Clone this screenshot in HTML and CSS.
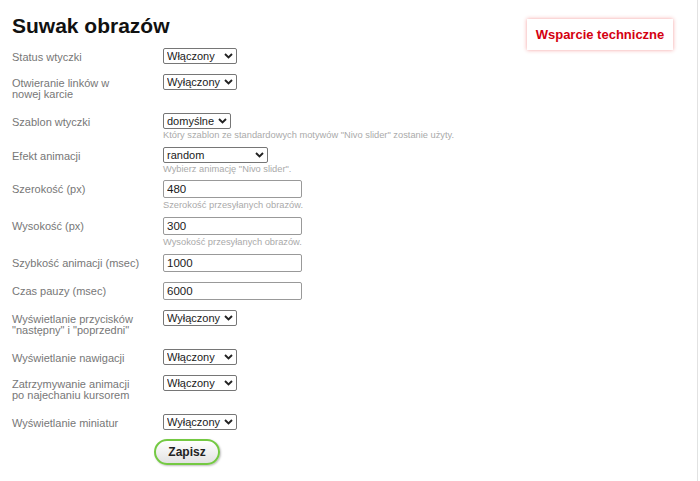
FILE: index.html
```html
<!DOCTYPE html>
<html lang="pl">
<head>
<meta charset="utf-8">
<title>Suwak obrazów</title>
<link rel="stylesheet" href="styles.css">
</head>
<body>
<div class="page">
  <header class="head">
    <h1 class="title">Suwak obrazów</h1>
    <a class="support" href="#">Wsparcie techniczne</a>
  </header>
  <form class="form">
    <div class="row">
      <label class="lbl">Status wtyczki</label>
      <div class="ctl"><select class="sel w74"><option>Włączony</option></select></div>
    </div>
    <div class="row">
      <label class="lbl multi">Otwieranie linków w<br>nowej karcie</label>
      <div class="ctl"><select class="sel w74"><option>Wyłączony</option></select></div>
    </div>
    <div class="row">
      <label class="lbl">Szablon wtyczki</label>
      <div class="ctl"><select class="sel w68"><option>domyślne</option></select>
        <p class="desc">Który szablon ze standardowych motywów "Nivo slider" zostanie użyty.</p></div>
    </div>
    <div class="row">
      <label class="lbl">Efekt animacji</label>
      <div class="ctl"><select class="sel w105"><option>random</option></select>
        <p class="desc">Wybierz animację "Nivo slider".</p></div>
    </div>
    <div class="row">
      <label class="lbl">Szerokość (px)</label>
      <div class="ctl"><input class="inp" type="text" value="480">
        <p class="desc">Szerokość przesyłanych obrazów.</p></div>
    </div>
    <div class="row">
      <label class="lbl">Wysokość (px)</label>
      <div class="ctl"><input class="inp" type="text" value="300">
        <p class="desc">Wysokość przesyłanych obrazów.</p></div>
    </div>
    <div class="row">
      <label class="lbl">Szybkość animacji (msec)</label>
      <div class="ctl"><input class="inp" type="text" value="1000"></div>
    </div>
    <div class="row">
      <label class="lbl">Czas pauzy (msec)</label>
      <div class="ctl"><input class="inp" type="text" value="6000"></div>
    </div>
    <div class="row">
      <label class="lbl multi">Wyświetlanie przycisków<br>"następny" i "poprzedni"</label>
      <div class="ctl"><select class="sel w74"><option>Wyłączony</option></select></div>
    </div>
    <div class="row">
      <label class="lbl">Wyświetlanie nawigacji</label>
      <div class="ctl"><select class="sel w74"><option>Włączony</option></select></div>
    </div>
    <div class="row">
      <label class="lbl multi">Zatrzymywanie animacji<br>po najechaniu kursorem</label>
      <div class="ctl"><select class="sel w74"><option>Włączony</option></select></div>
    </div>
    <div class="row">
      <label class="lbl">Wyświetlanie miniatur</label>
      <div class="ctl"><select class="sel w74"><option>Wyłączony</option></select></div>
    </div>
    <div class="actions">
      <button class="save" type="button">Zapisz</button>
    </div>
  </form>
</div>
</body>
</html>
```
FILE: styles.css
```css
* { box-sizing: border-box; }
html, body { margin: 0; padding: 0; background: #fff; }
body { font-family: "Liberation Sans", Arial, sans-serif; color: #222; }
.page {
  position: relative;
  width: 698px;
  height: 481px;
  border-right: 1px solid #e2e2e2;
  padding: 0 0 0 12px;
}
.head { display: block; }
.title {
  margin: 0;
  padding-top: 13px;
  font-size: 21px;
  line-height: 25px;
  font-weight: bold;
  color: #111;
}
.support {
  position: absolute;
  top: 19px;
  left: 527px;
  width: 146px;
  height: 31px;
  display: flex;
  align-items: center;
  justify-content: center;
  background: #fff;
  color: #d40010;
  font-size: 13px;
  font-weight: bold;
  text-decoration: none;
  box-shadow: 0 0 4px rgba(230, 40, 40, 0.45);
}
.form { margin-top: 5px; }
.row {
  display: grid;
  grid-template-columns: 151px 1fr;
  padding: 5px 0;
}
.lbl {
  font-size: 11px;
  line-height: 11px;
  color: #777;
  padding: 4px 0 0 0;
}
.lbl.multi { padding-bottom: 3px; }
.ctl { display: flex; flex-direction: column; align-items: flex-start; }
.sel {
  -webkit-appearance: none;
  appearance: none;
  height: 16px;
  font-family: "Liberation Sans", Arial, sans-serif;
  font-size: 11px;
  line-height: 14px;
  color: #1a1a1a;
  padding: 0 12px 0 3px;
  border: 1px solid #767676;
  border-radius: 2px;
  background-color: #fff;
  background-image: url("data:image/svg+xml,%3Csvg xmlns='http://www.w3.org/2000/svg' width='9' height='6' viewBox='0 0 9 6'%3E%3Cpath d='M1 1 L4.5 4.5 L8 1' fill='none' stroke='%23222' stroke-width='1.9'/%3E%3C/svg%3E");
  background-repeat: no-repeat;
  background-position: right 3px center;
  background-size: 9px 6px;
}
.w74 { width: 74px; }
.w68 { width: 68px; }
.w105 { width: 105px; }
.inp {
  width: 139px;
  height: 18px;
  font-family: "Liberation Sans", Arial, sans-serif;
  font-size: 11.5px;
  color: #1a1a1a;
  padding: 0 3px;
  border: 1px solid #999;
  border-radius: 2px;
}
.desc {
  margin: 0;
  font-size: 9.3px;
  line-height: 8px;
  padding-top: 2px;
  height: 7.5px;
  color: #aaa;
}
.inp + .desc { height: 9px; padding-top: 3px; }
.actions { padding: 4px 0 0 142px; }
.save {
  width: 66px;
  height: 26px;
  border: 2px solid #74c943;
  border-radius: 13px;
  background: linear-gradient(#ffffff, #e2e2e2);
  box-shadow: 1px 1px 2px rgba(0,0,0,0.25);
  font-family: "Liberation Sans", Arial, sans-serif;
  font-size: 12px;
  font-weight: bold;
  color: #222;
  padding: 0;
}
```
